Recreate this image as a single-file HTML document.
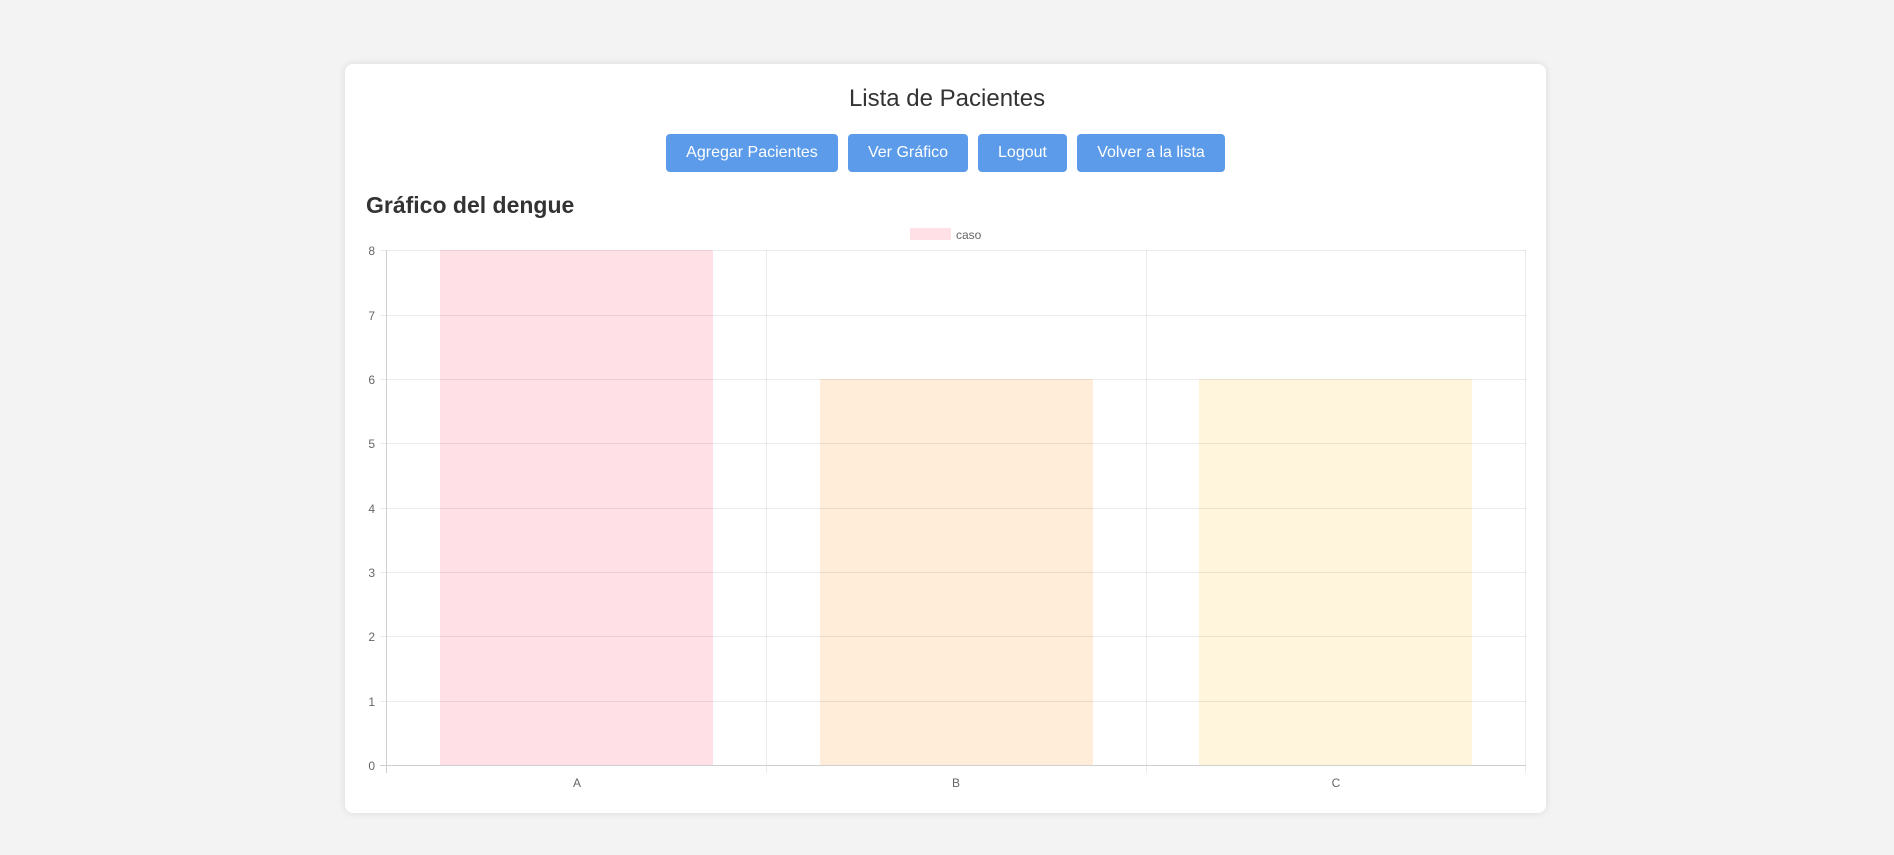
<!DOCTYPE html>
<html><head><meta charset="utf-8"><style>
html,body{margin:0;padding:0;background:#f3f3f3;width:1894px;height:855px;overflow:hidden;font-family:"Liberation Sans",Arial,sans-serif}
.card{position:absolute;left:345px;top:64px;width:1201px;height:749px;background:#fff;border-radius:8px;box-shadow:0 0 8px rgba(0,0,0,0.1)}
h1{position:absolute;left:0;right:0;top:84px;margin:0;text-align:center;font-weight:normal;font-size:24px;color:#333;line-height:30px}
.btn{position:absolute;top:134px;height:38px;background:#5b9be9;color:#fff;border-radius:4px;font-size:16px;line-height:38px;text-align:center}
h2{position:absolute;left:366px;top:191px;margin:0;font-size:23px;font-weight:bold;color:#333;line-height:28px}
svg{position:absolute;left:0;top:0}
</style></head><body>
<div class="card"></div>
<h1>Lista de Pacientes</h1>
<div class="btn" style="left:666px;width:172px">Agregar Pacientes</div>
<div class="btn" style="left:848px;width:120px">Ver Gráfico</div>
<div class="btn" style="left:978px;width:89px">Logout</div>
<div class="btn" style="left:1077px;width:148px">Volver a la lista</div>
<h2>Gráfico del dengue</h2>
<svg width="1894" height="855" font-family="Liberation Sans, Arial, sans-serif" font-size="12" fill="#666">
<rect x="910" y="228" width="41" height="12" fill="#ffe0e6"/>
<text x="956" y="239" font-size="12">caso</text>
<rect x="440" y="250" width="273" height="515" fill="rgba(255,99,132,0.2)"/>
<rect x="820" y="379" width="273" height="386" fill="rgba(255,159,64,0.2)"/>
<rect x="1199" y="379" width="273" height="386" fill="rgba(255,205,86,0.2)"/>
<g stroke="rgba(0,0,0,0.08)" stroke-width="1">
<line x1="380" y1="250.5" x2="1526" y2="250.5"/>
<line x1="380" y1="315.5" x2="1526" y2="315.5"/>
<line x1="380" y1="379.5" x2="1526" y2="379.5"/>
<line x1="380" y1="443.5" x2="1526" y2="443.5"/>
<line x1="380" y1="508.5" x2="1526" y2="508.5"/>
<line x1="380" y1="572.5" x2="1526" y2="572.5"/>
<line x1="380" y1="636.5" x2="1526" y2="636.5"/>
<line x1="380" y1="701.5" x2="1526" y2="701.5"/>
<line x1="766.5" y1="250" x2="766.5" y2="773"/>
<line x1="1146.5" y1="250" x2="1146.5" y2="773"/>
<line x1="1525.5" y1="250" x2="1525.5" y2="773"/>
</g>
<g stroke="#cfcfcf" stroke-width="1">
<line x1="386.5" y1="250" x2="386.5" y2="773"/>
<line x1="380" y1="765.5" x2="1526" y2="765.5"/>
</g>
<g text-anchor="end">
<text x="375" y="255">8</text><text x="375" y="320">7</text><text x="375" y="384">6</text><text x="375" y="448">5</text>
<text x="375" y="513">4</text><text x="375" y="577">3</text><text x="375" y="641">2</text><text x="375" y="706">1</text><text x="375" y="770">0</text>
</g>
<g text-anchor="middle">
<text x="577" y="787">A</text><text x="956" y="787">B</text><text x="1336" y="787">C</text>
</g>
</svg>
</body></html>
